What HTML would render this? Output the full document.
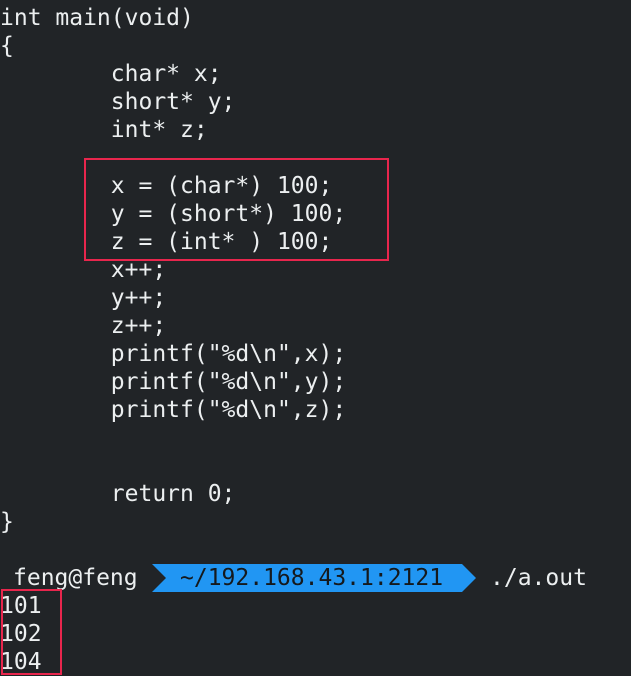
<!DOCTYPE html>
<html><head><meta charset="utf-8"><style>
html,body{margin:0;padding:0;}
body{width:631px;height:676px;background:#212427;overflow:hidden;position:relative;
font-family:"DejaVu Sans Mono","Liberation Mono",monospace;font-size:23px;color:#eceff0;}
.l{position:absolute;left:0;height:28px;line-height:28px;white-space:pre;}
.box{position:absolute;border:2px solid #e8264d;box-sizing:border-box;}
</style></head><body>
<div class="l" style="top:4px">int main(void)</div>
<div class="l" style="top:32px">{</div>
<div class="l" style="top:60px">        char* x;</div>
<div class="l" style="top:88px">        short* y;</div>
<div class="l" style="top:116px">        int* z;</div>
<div class="l" style="top:172px">        x = (char*) 100;</div>
<div class="l" style="top:200px">        y = (short*) 100;</div>
<div class="l" style="top:228px">        z = (int* ) 100;</div>
<div class="l" style="top:256px">        x++;</div>
<div class="l" style="top:284px">        y++;</div>
<div class="l" style="top:312px">        z++;</div>
<div class="l" style="top:340px">        printf("%d\n",x);</div>
<div class="l" style="top:368px">        printf("%d\n",y);</div>
<div class="l" style="top:396px">        printf("%d\n",z);</div>
<div class="l" style="top:480px">        return 0;</div>
<div class="l" style="top:508px">}</div>
<svg style="position:absolute;left:0;top:0" width="631" height="676"><polygon points="152,564 462,564 476,578 462,592 152,592 166,578" fill="#2196f3"/></svg>
<div class="l" style="top:564px;left:13px">feng@feng</div>
<div class="l" style="top:564px;left:180px;color:#15191c">~/192.168.43.1:2121</div>
<div class="l" style="top:564px;left:490px">./a.out</div>
<div class="l" style="top:592px">101</div>
<div class="l" style="top:620px">102</div>
<div class="l" style="top:648px">104</div>
<div class="box" style="left:84px;top:158px;width:305px;height:103px"></div>
<div class="box" style="left:1px;top:589px;width:61px;height:86px"></div>
</body></html>
